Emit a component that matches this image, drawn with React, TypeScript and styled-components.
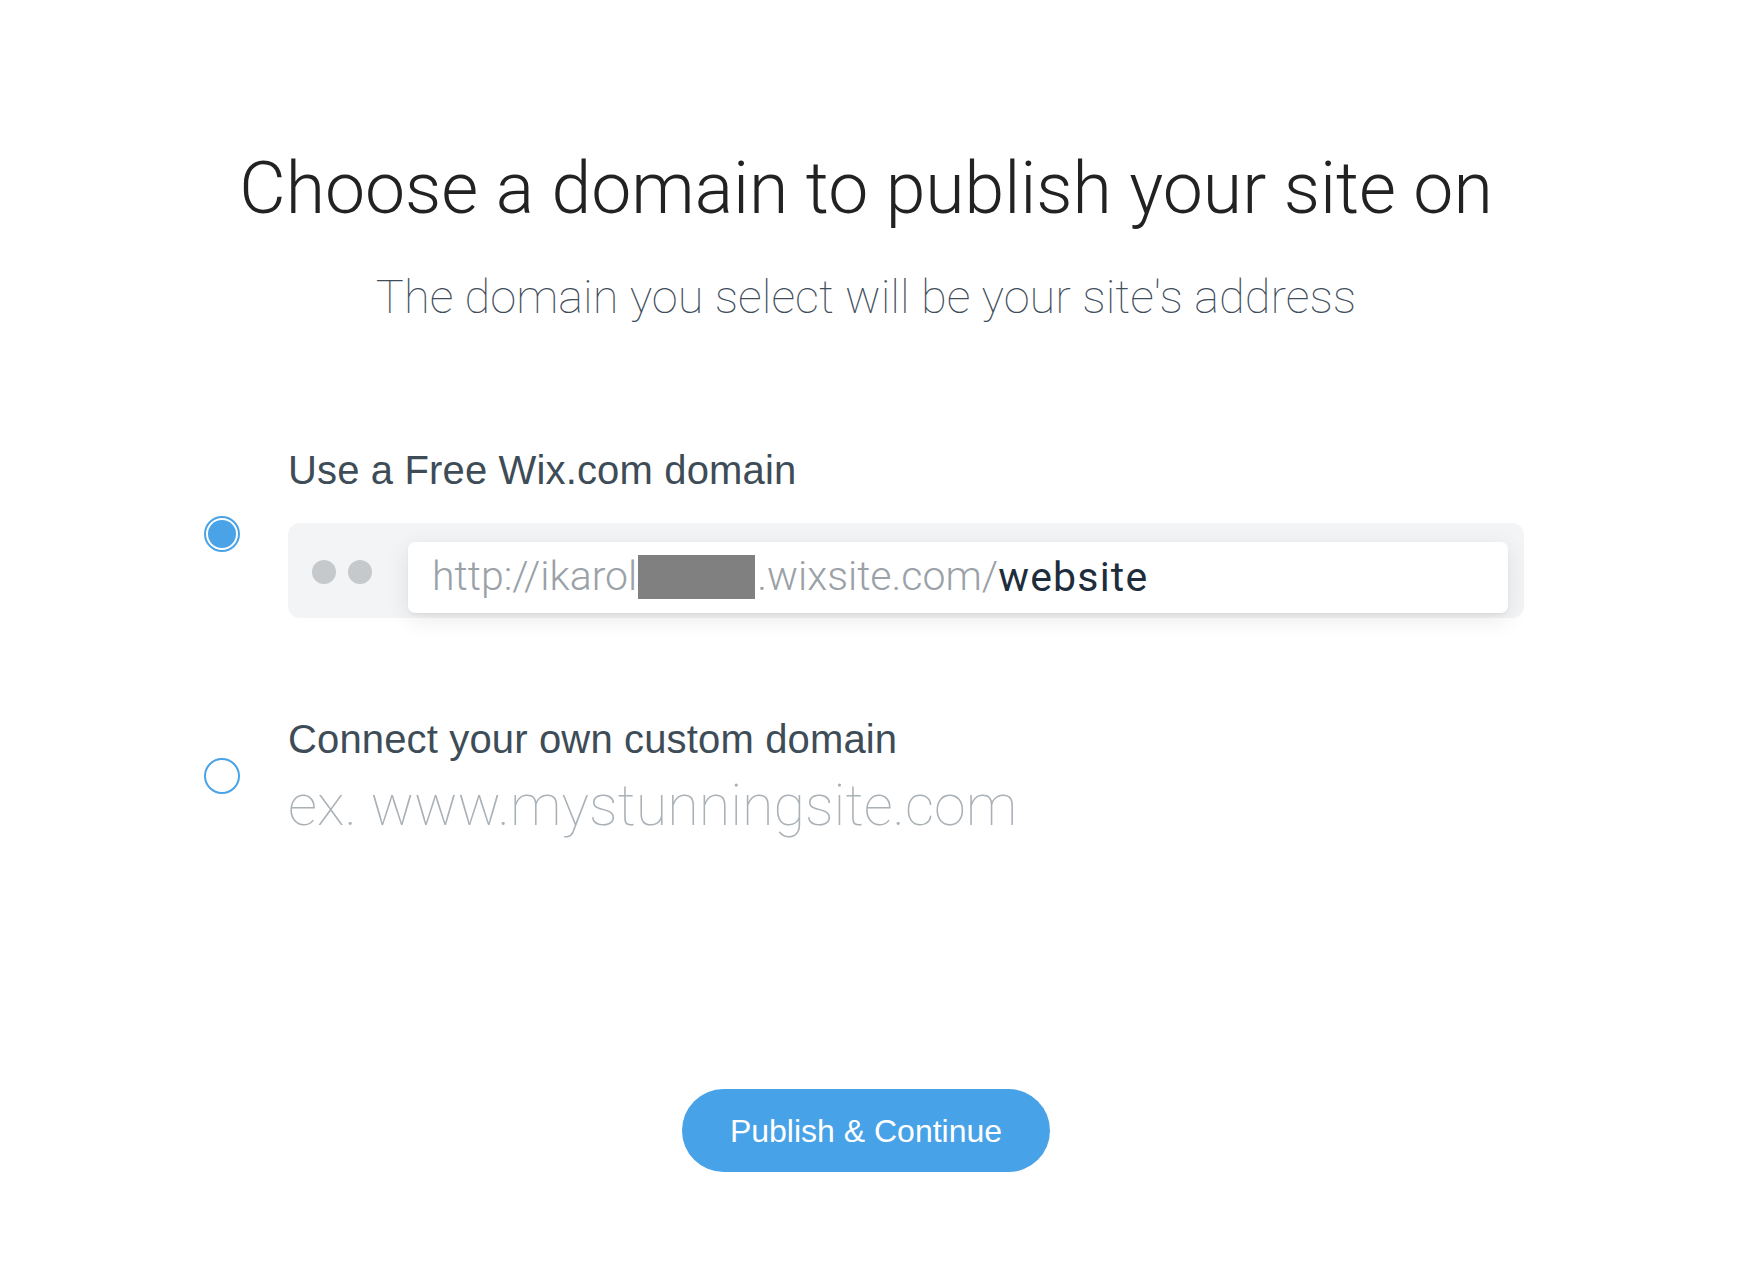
import React from "react";
import styled, { createGlobalStyle } from "styled-components";

const Global = createGlobalStyle`
  html, body {
    margin: 0;
    padding: 0;
    background: #ffffff;
  }
  body {
    font-family: "Liberation Sans", Arial, sans-serif;
    -webkit-font-smoothing: antialiased;
  }
`;

const Page = styled.main`
  display: flex;
  flex-direction: column;
  align-items: center;
  padding: 153px 6px 0 0;
  min-height: 1274px;
  box-sizing: border-box;
`;

const Title = styled.h1`
  margin: 0;
  font-family: "Roboto", "Liberation Sans", sans-serif;
  font-weight: 300;
  font-size: 71.5px;
  line-height: 1;
  color: #222222;
  white-space: nowrap;
`;

const Subtitle = styled.p`
  margin: 48px 0 0;
  font-family: "Roboto", "Liberation Sans", sans-serif;
  font-weight: 100;
  font-size: 47px;
  line-height: 1;
  color: #3f4d5a;
  white-space: nowrap;
`;

const Options = styled.section`
  width: 1320px;
  margin: 130px 4px 0 0;
  display: flex;
  flex-direction: column;
  gap: 101px;
`;

const OptionRow = styled.div`
  display: grid;
  grid-template-columns: 36px 1fr;
  column-gap: 48px;
  align-items: center;
`;

const Radio = styled.span<{ $checked?: boolean }>`
  display: block;
  width: 36px;
  height: 36px;
  box-sizing: border-box;
  border-radius: 50%;
  border: 2px solid #4aa3e6;
  padding: 2px;
  background: ${(p) => (p.$checked ? "#4aa3e6" : "#ffffff")};
  background-clip: content-box;
`;

const OptionBody = styled.div`
  display: flex;
  flex-direction: column;
`;

const Label = styled.div`
  font-family: "Liberation Sans", Arial, sans-serif;
  font-size: 40px;
  letter-spacing: 0.15px;
  line-height: 1;
  color: #3e4c58;
  white-space: nowrap;
`;

const BrowserBar = styled.div`
  margin-top: 33px;
  height: 95px;
  box-sizing: border-box;
  display: flex;
  align-items: center;
  padding: 0 16px 0 24px;
  background: #f3f4f5;
  border-radius: 12px;
`;

const Dots = styled.div`
  display: flex;
  gap: 12px;
  margin-top: 3px;
  flex: none;
`;

const Dot = styled.span`
  width: 24px;
  height: 24px;
  border-radius: 50%;
  background: #c5c9cc;
`;

const AddressField = styled.div`
  align-self: flex-end;
  margin: 0 0 5px 36px;
  flex: 1;
  height: 71px;
  box-sizing: border-box;
  display: flex;
  align-items: center;
  padding-left: 24px;
  background: #ffffff;
  border-radius: 7px;
  box-shadow: 0 6px 24px rgba(0, 0, 0, 0.09), 0 2px 3px rgba(0, 0, 0, 0.045);
  white-space: nowrap;
`;

const UrlText = styled.span`
  font-family: "Roboto", "Liberation Sans", sans-serif;
  font-weight: 300;
  font-size: 41px;
  line-height: 1;
  color: #9aa1a7;
`;

const Redacted = styled.span`
  display: inline-block;
  width: 117px;
  height: 44px;
  margin: 0 2px 0 1px;
  background: #808080;
  vertical-align: -9px;
`;

const UrlPath = styled.span`
  font-family: "Roboto", "Liberation Sans", sans-serif;
  font-weight: 400;
  font-size: 41px;
  letter-spacing: 1.2px;
  line-height: 1;
  color: #1e2d3b;
`;

const Placeholder = styled.div`
  margin-top: 18px;
  font-family: "Roboto", "Liberation Sans", sans-serif;
  font-weight: 100;
  font-size: 57.5px;
  line-height: 1;
  color: #a9b0b6;
  white-space: nowrap;
`;

const PublishButton = styled.button`
  margin-top: 255px;
  width: 368px;
  height: 83px;
  border: none;
  border-radius: 42px;
  background: #48a2e7;
  color: #ffffff;
  font-family: "Liberation Sans", Arial, sans-serif;
  font-size: 32px;
  line-height: 1;
  cursor: pointer;
  padding: 0;
`;

export default function App() {
  return (
    <>
      <Global />
      <Page>
        <Title>Choose a domain to publish your site on</Title>
        <Subtitle>The domain you select will be your site's address</Subtitle>
        <Options>
          <OptionRow>
            <Radio $checked />
            <OptionBody>
              <Label>Use a Free Wix.com domain</Label>
              <BrowserBar>
                <Dots>
                  <Dot />
                  <Dot />
                </Dots>
                <AddressField>
                  <UrlText>
                    http://ikarol
                    <Redacted />
                    .wixsite.com/
                  </UrlText>
                  <UrlPath>website</UrlPath>
                </AddressField>
              </BrowserBar>
            </OptionBody>
          </OptionRow>
          <OptionRow>
            <Radio />
            <OptionBody>
              <Label>Connect your own custom domain</Label>
              <Placeholder>ex. www.mystunningsite.com</Placeholder>
            </OptionBody>
          </OptionRow>
        </Options>
        <PublishButton>Publish &amp; Continue</PublishButton>
      </Page>
    </>
  );
}
